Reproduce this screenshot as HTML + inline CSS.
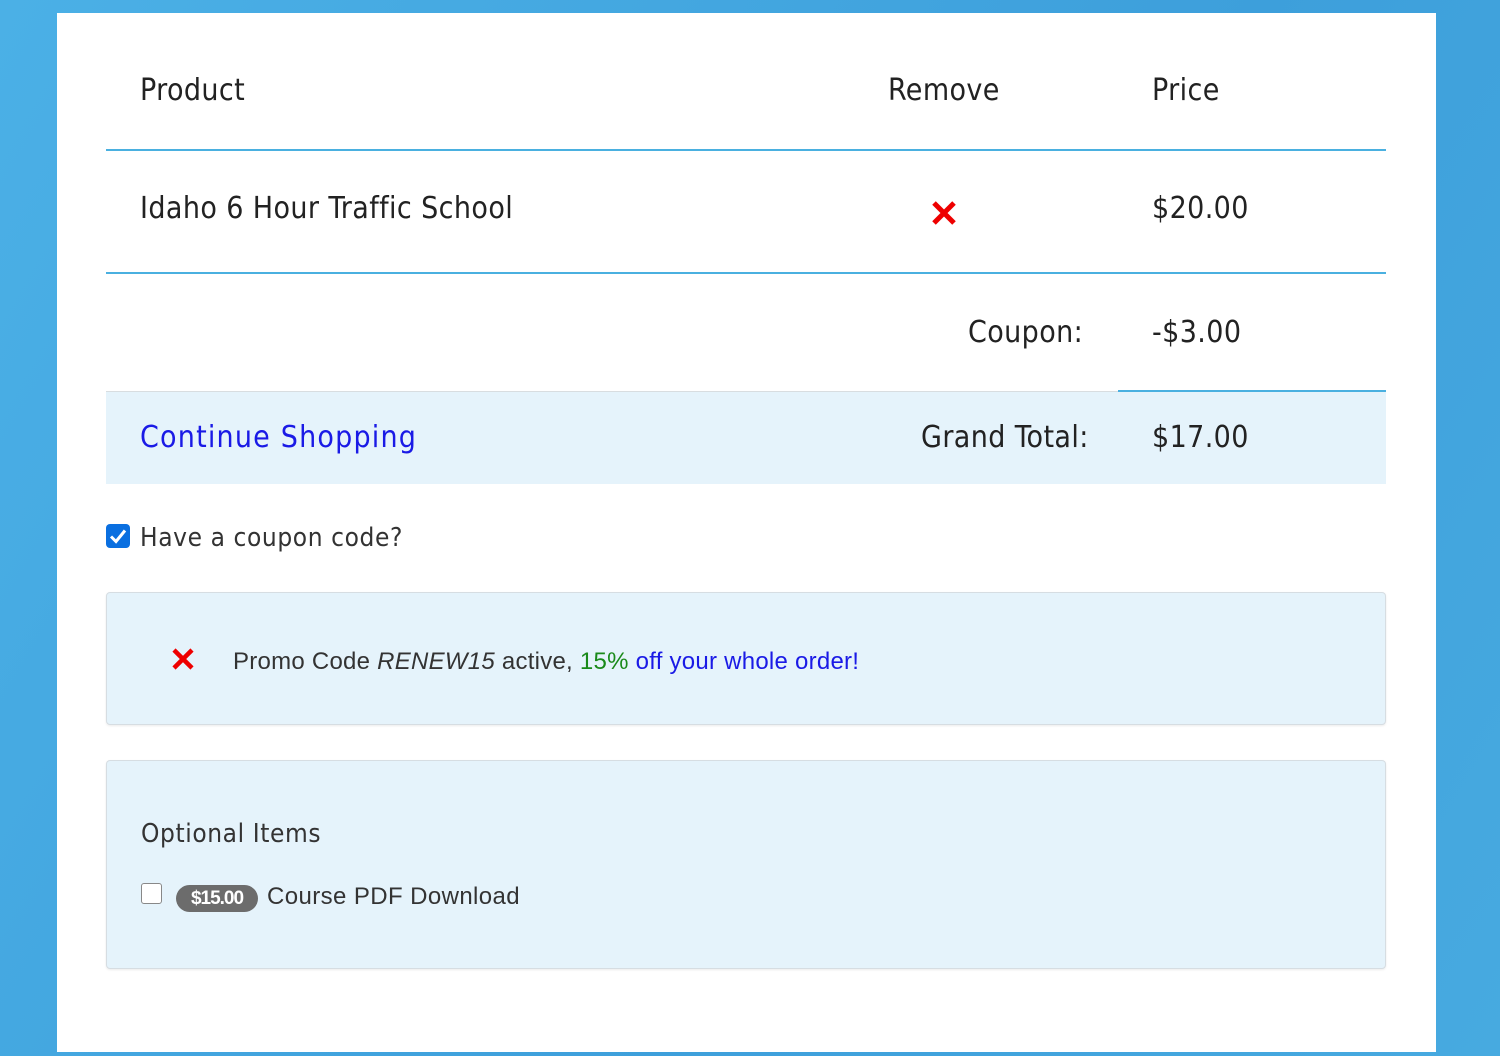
<!DOCTYPE html>
<html><head><style>
body{margin:0;width:1500px;height:1056px;background:linear-gradient(120deg,#4bb0e6,#3d9fdb 60%,#47aae0);font-family:"Liberation Sans",sans-serif;position:relative;overflow:hidden;color:#222}
.card{position:absolute;left:57px;top:13px;width:1379px;height:1039px;background:#fff}
.a{position:absolute;white-space:nowrap}
.big{font-size:30px;font-family:"DejaVu Sans Condensed","Liberation Sans",sans-serif;letter-spacing:0.4px}
.line{position:absolute;height:2px;background:#4ab0e0}
.box{position:absolute;left:106px;width:1278px;background:#e5f3fb;border:1px solid #d6dde2;border-radius:4px;box-shadow:0 1px 2px rgba(0,0,0,.08)}
</style></head><body>
<div class="card"></div>
<div class="a big" style="left:140px;top:73px">Product</div>
<div class="a big" style="left:888px;top:73px">Remove</div>
<div class="a big" style="left:1152px;top:73px">Price</div>
<div class="line" style="left:106px;top:149px;width:1280px"></div>
<div class="a big" style="left:140px;top:191px">Idaho 6 Hour Traffic School</div>
<svg class="a" style="left:931px;top:200px" width="26" height="26" viewBox="0 0 26 26"><path d="M3 3L23 23M23 3L3 23" stroke="#e00" stroke-width="5"/></svg>
<div class="a big" style="left:1152px;top:191px">$20.00</div>
<div class="line" style="left:106px;top:272px;width:1280px"></div>
<div class="a big" style="left:968px;top:315px">Coupon:</div>
<div class="a big" style="left:1152px;top:315px">-$3.00</div>
<div class="a" style="left:106px;top:391px;width:1280px;height:92px;background:#e5f3fb;border-top:1px solid #d8dde0"></div>
<div class="line" style="left:1118px;top:390px;width:268px"></div>
<div class="a big" style="left:140px;top:420px;color:#1a1ae6;letter-spacing:1.2px">Continue Shopping</div>
<div class="a big" style="left:921px;top:420px">Grand Total:</div>
<div class="a big" style="left:1152px;top:420px">$17.00</div>
<div class="a" style="left:106px;top:524px;width:24px;height:24px;background:#0a6fe0;border-radius:4px"><svg width="24" height="24"><path d="M5 12.5L10 17.5L19 6.5" stroke="#fff" stroke-width="3" fill="none"/></svg></div>
<div class="a" style="left:140px;top:523px;font-size:26px;font-family:'DejaVu Sans Condensed',sans-serif;color:#333;letter-spacing:0.6px">Have a coupon code?</div>
<div class="box" style="top:592px;height:131px"></div>
<svg class="a" style="left:171px;top:647px" width="24" height="24" viewBox="0 0 24 24"><path d="M3 3L21 21M21 3L3 21" stroke="#e00" stroke-width="4.5"/></svg>
<div class="a" style="left:233px;top:648px;font-size:24px;color:#333;letter-spacing:0.25px">Promo Code <i>RENEW15</i> active, <span style="color:#1a8a1a">15%</span> <span style="color:#1a1ae6">off your whole order!</span></div>
<div class="box" style="top:760px;height:207px"></div>
<div class="a" style="left:141px;top:819px;font-size:26px;font-family:'DejaVu Sans Condensed',sans-serif;color:#333;letter-spacing:0.6px">Optional Items</div>
<div class="a" style="left:141px;top:883px;width:19px;height:19px;background:#fff;border:1px solid #888;border-radius:3px"></div>
<div class="a" style="left:176px;top:885px;width:82px;height:27px;background:#6c6c6c;border-radius:14px;color:#fff;font-weight:bold;font-size:19px;line-height:27px;text-align:center;letter-spacing:-1px">$15.00</div>
<div class="a" style="left:267px;top:883px;font-size:24px;color:#333;letter-spacing:0.4px">Course PDF Download</div>
</body></html>
